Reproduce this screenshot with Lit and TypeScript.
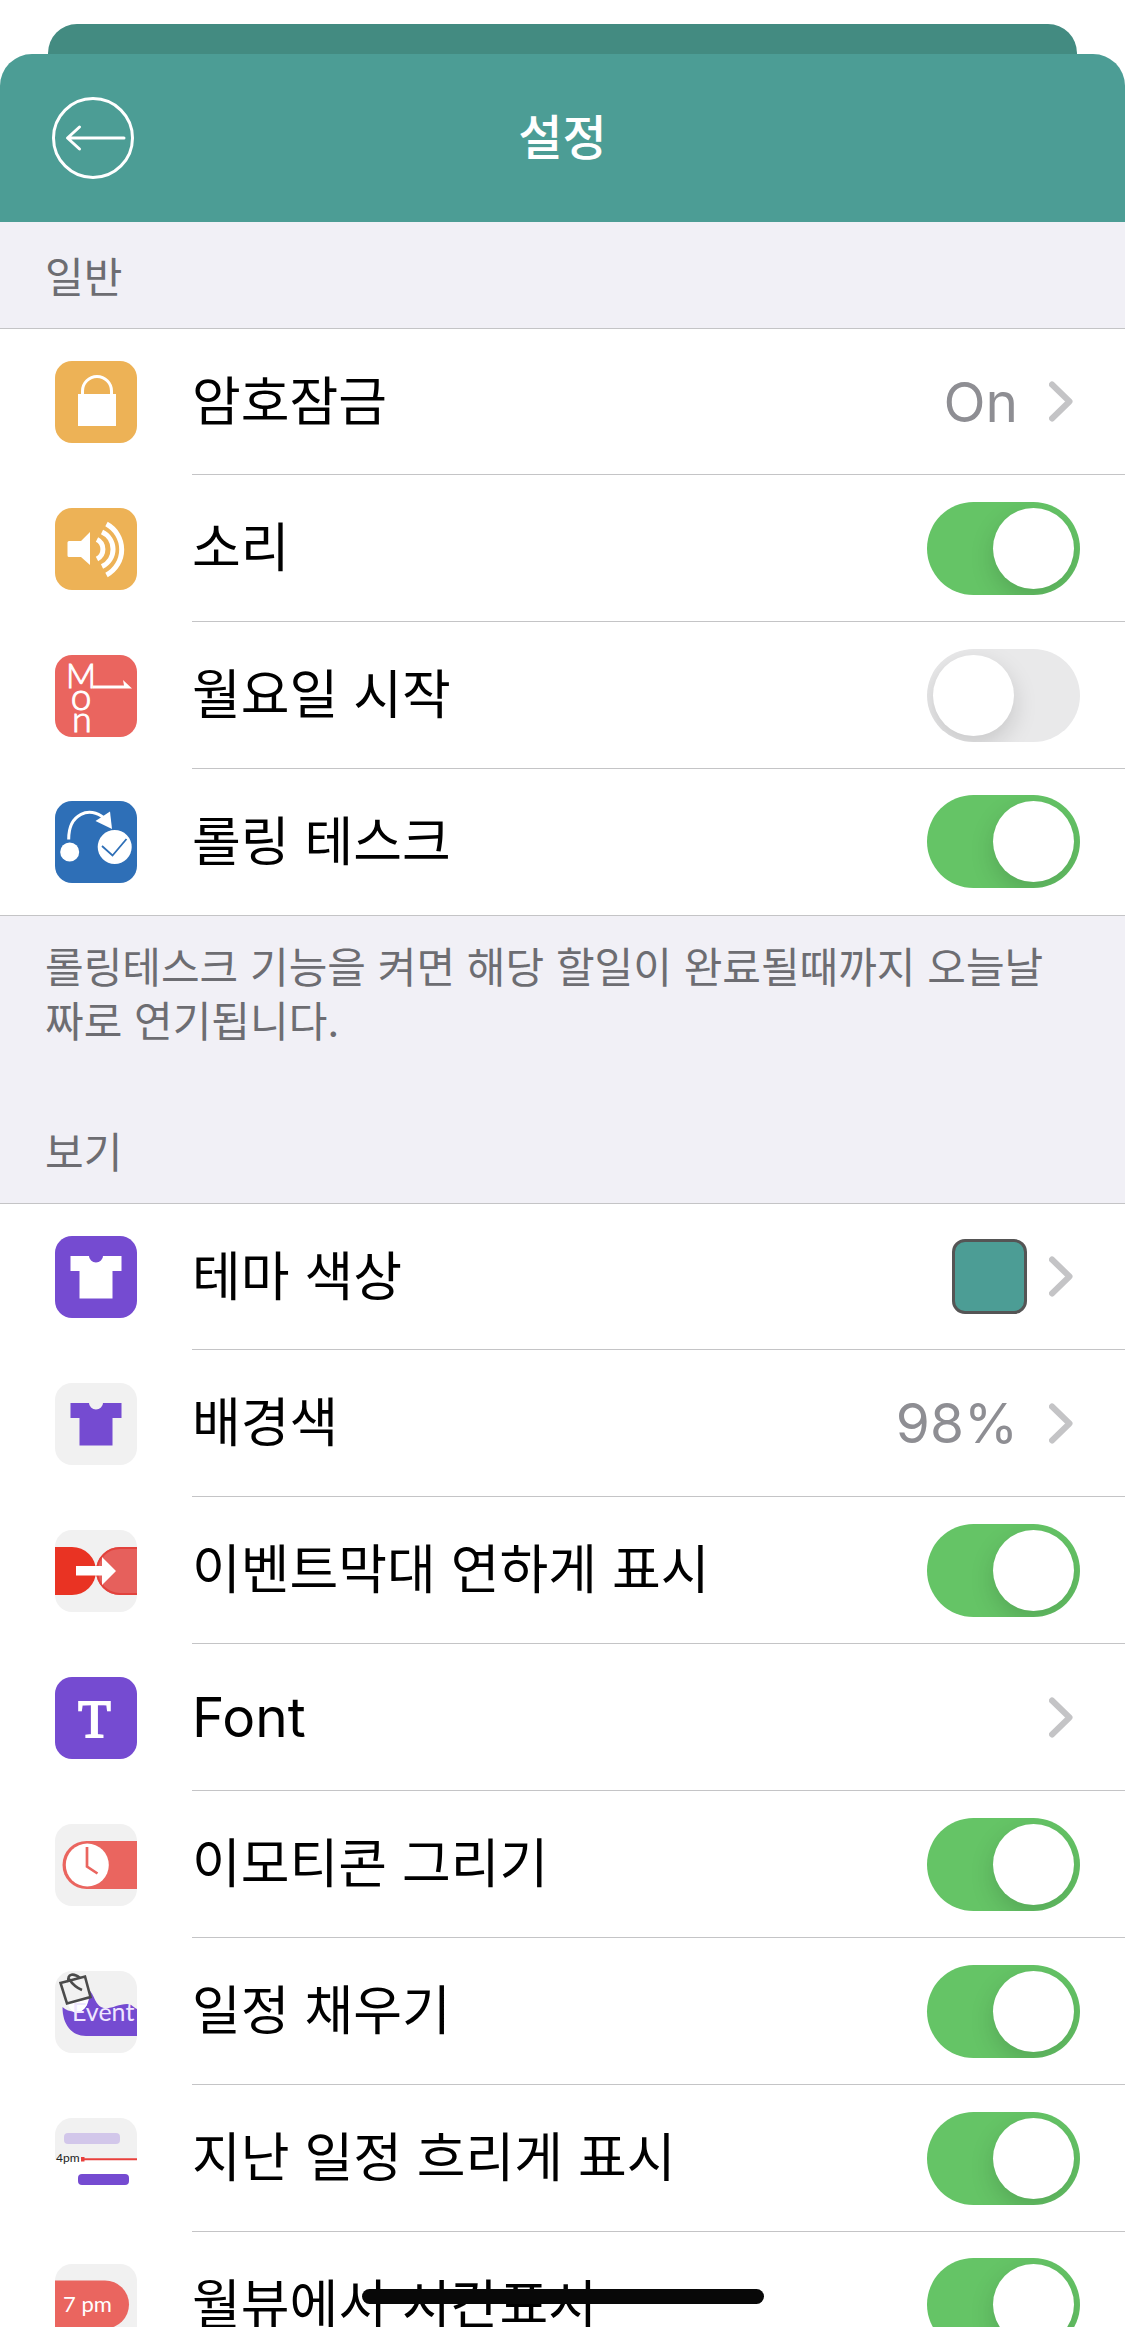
import { LitElement, html, css, svg, nothing, TemplateResult } from "lit";
import { customElement, property, state } from "lit/decorators.js";
import { classMap } from "lit/directives/class-map.js";

type IconName =
  | "lock" | "sound" | "monday" | "rolling" | "theme" | "background"
  | "fade" | "font" | "clock" | "fill" | "past" | "time";

interface Item {
  id: string;
  icon: IconName;
  label: string;
  latin?: boolean;
  on?: boolean;
  value?: string;
  swatch?: boolean;
}

interface Section {
  title: string;
  items: Item[];
  note?: string;
}

const SECTIONS: Section[] = [
  {
    title: "일반",
    items: [
      { id: "passcode", icon: "lock", label: "암호잠금", value: "On" },
      { id: "sound", icon: "sound", label: "소리", on: true },
      { id: "monday", icon: "monday", label: "월요일 시작", on: false },
      { id: "rolling", icon: "rolling", label: "롤링 테스크", on: true },
    ],
    note: "롤링테스크 기능을 켜면 해당 할일이 완료될때까지 오늘날짜로 연기됩니다.",
  },
  {
    title: "보기",
    items: [
      { id: "theme", icon: "theme", label: "테마 색상", swatch: true },
      { id: "background", icon: "background", label: "배경색", value: "98%" },
      { id: "fade", icon: "fade", label: "이벤트막대 연하게 표시", on: true },
      { id: "font", icon: "font", label: "Font", latin: true },
      { id: "emoticon", icon: "clock", label: "이모티콘 그리기", on: true },
      { id: "fill", icon: "fill", label: "일정 채우기", on: true },
      { id: "past", icon: "past", label: "지난 일정 흐리게 표시", on: true },
      { id: "time", icon: "time", label: "월뷰에서 시간표시", on: true },
    ],
  },
];

const tile = (fill: string) => svg`<rect width="82" height="82" rx="17" fill=${fill}></rect>`;
const shirt = (fill: string) => svg`
  <path fill=${fill} d="M15.500 20H34a7 6.500 0 0 0 14 0H66.500V35H57.500V62.500H24.500V35H15.500Z"></path>`;

const ICONS: Record<IconName, TemplateResult> = {
  lock: svg`${tile("#edb256")}
    <rect x="23" y="33" width="38" height="32" fill="#fff"></rect>
    <path d="M27.500 34V30a14.500 14.500 0 0 1 29 0V34" fill="none" stroke="#fff" stroke-width="3"></path>`,
  sound: svg`${tile("#edb256")}
    <path d="M14 33H26L35 24V57L26 49H14a1.500 1.500 0 0 1 -1.500 -1.500V34.500A1.500 1.500 0 0 1 14 33Z" fill="#fff"></path>
    <g fill="none" stroke="#fff" stroke-width="5">
      <path d="M42 31.500A11 11 0 0 1 42 51"></path>
      <path d="M47 24A19 19 0 0 1 47 58.500"></path>
      <path d="M51.500 16A29 29 0 0 1 51.500 67"></path>
    </g>`,
  monday: svg`${tile("#ea655f")}
    <g fill="#fff" stroke="#fff" stroke-width="1" font-family="Lato, sans-serif" font-weight="300" text-anchor="middle">
      <text x="26" y="33" font-size="33">M</text>
      <text x="26" y="55" font-size="37">o</text>
      <text x="27" y="77" font-size="36">n</text>
    </g>
    <path d="M38 30.500H69L68 25L77 33.500H38Z" fill="#fff"></path>`,
  rolling: svg`${tile("#2e6fb7")}
    <circle cx="14.700" cy="51" r="9.500" fill="#fff"></circle>
    <circle cx="59.700" cy="46" r="17" fill="#fff"></circle>
    <path d="M13.700 38.500C13.500 12 35 5 49 17" fill="none" stroke="#fff" stroke-width="3"></path>
    <path d="M40.500 20L55 10.500L57 28Z" fill="#fff"></path>
    <path d="M47 45L57.500 54.500L71.500 38" fill="none" stroke="#2e6fb7" stroke-width="1.800"></path>`,
  theme: svg`${tile("#754bd1")}${shirt("#fff")}`,
  background: svg`${tile("#f1f1f1")}${shirt("#754bd1")}`,
  fade: svg`${tile("#f1f1f1")}
    <path d="M0 17H17a24 24 0 0 1 0 48H0Z" fill="#e93323"></path>
    <path d="M82 17H65a24 24 0 0 0 0 48H82Z" fill="#e6605c"></path>
    <path d="M82 18H65a23 23 0 0 0 0 46H82" fill="none" stroke="#e2423c" stroke-width="2"></path>
    <path d="M21 36H47V27L61 41L47 55V45.500H21Z" fill="#fff"></path>`,
  font: svg`${tile("#754bd1")}
    <text x="39.500" y="60" font-size="53" text-anchor="middle" fill="#fff" stroke="#fff" stroke-width="2"
      font-family="Liberation Serif, serif">T</text>`,
  clock: svg`${tile("#f1f1f1")}
    <path d="M82 17H31.500a24 24 0 0 0 0 48H82Z" fill="#ea655f"></path>
    <circle cx="32.300" cy="41" r="21.500" fill="#fff"></circle>
    <path d="M32 23V42.500L42.500 49.500" fill="none" stroke="#ea655f" stroke-width="2.700"></path>`,
  fill: svg`${tile("#f1f1f1")}
    <path d="M7.500 36C14 42 26 43 32 34L34 19C39 23 40 33 46 36C54 40 62 33 72 33C77 33 79 37 82 38V65H31C17 65 7.500 54 7.500 36Z" fill="#754bd1"></path>
    <path d="M13 34L34 27C33 33 30 40 22 42C18 42 15 38 13 34Z" fill="#fff"></path>
    <path d="M5.500 12L30 5.500L35.500 26L12 32.500Z" fill="#f1f1f1" stroke="#4b4b4b" stroke-width="2.600"></path>
    <path d="M13.500 11C12 2 19 2 25 7M14 8C18 14 22 17 27 19" fill="none" stroke="#4b4b4b" stroke-width="2.600"></path>
    <text x="17" y="49.500" font-size="25" fill="#efe7ff" font-family="Lato, sans-serif">Event</text>`,
  past: svg`
    <path d="M0 41V17A17 17 0 0 1 17 0H65A17 17 0 0 1 82 17V41Z" fill="#f1f1f1"></path>
    <rect x="9" y="15" width="56" height="11" rx="4" fill="#d2c7ea"></rect>
    <text x="1" y="44" font-size="12" fill="#222" font-family="Lato, sans-serif">4pm</text>
    <path d="M27 41.200H82" stroke="#e8403c" stroke-width="2"></path>
    <rect x="26" y="39" width="3.500" height="4.500" fill="#e8403c"></rect>
    <rect x="23" y="56" width="51" height="11" rx="4" fill="#754bd1"></rect>`,
  time: svg`${tile("#f1f1f1")}
    <path d="M0 16.500H50a24 24 0 0 1 0 48H0Z" fill="#ea655f"></path>
    <text x="8" y="48" font-size="22" fill="#fff" font-family="Lato, sans-serif">7 pm</text>`,
};

@customElement("setting-row")
export class SettingRow extends LitElement {
  @property({ attribute: false }) item!: Item;
  @state() private on = false;

  static styles = css`
    :host {
      display: block;
    }
    .row {
      display: flex;
      align-items: stretch;
      width: 100%;
      height: 100%;
      padding: 0 0 0 55px;
      border: 0;
      background: none;
      font: inherit;
      color: inherit;
      text-align: left;
      cursor: pointer;
    }
    .row,
    .row * {
      box-sizing: border-box;
    }
    .icon {
      flex: none;
      align-self: center;
      width: 82px;
      height: 82px;
      margin-right: 55px;
    }
    .body {
      display: flex;
      flex: 1;
      min-width: 0;
      align-items: center;
      padding-right: 45px;
      border-bottom: 1px solid var(--line);
    }
    .label {
      flex: 1;
      min-width: 0;
      font-size: 53px;
      line-height: 72px;
    }
    .latin,
    .value {
      font-size: 55px;
    }
    .value {
      color: #8e8e93;
      line-height: 72px;
      margin-right: 31px;
    }
    .swatch {
      width: 75px;
      height: 75px;
      margin-right: 22px;
      border: 3px solid #555;
      border-radius: 13px;
      background: var(--theme);
    }
    .chevron {
      flex: none;
      width: 24px;
      height: 41px;
      margin-right: 7px;
    }
    .toggle {
      appearance: none;
      flex: none;
      width: 153px;
      height: 93px;
      margin: 0;
      padding: 6px;
      border-radius: 47px;
      background: #e9e9ea;
      overflow: hidden;
      cursor: pointer;
    }
    .toggle::before {
      content: "";
      display: block;
      width: 81px;
      height: 81px;
      border-radius: 50%;
      background: #fff;
      box-shadow: 0 9px 24px rgba(0, 0, 0, 0.15);
    }
    .toggle:checked {
      background: #65c466;
    }
    .toggle:checked::before {
      margin-left: auto;
    }
  `;

  willUpdate(changed: Map<string, unknown>) {
    if (changed.has("item")) this.on = this.item.on ?? false;
  }

  private icon() {
    return html`<svg class="icon" viewBox="0 0 82 82" aria-hidden="true">${ICONS[this.item.icon]}</svg>`;
  }

  render() {
    const { id, label, latin, value, swatch, on } = this.item;
    if (on !== undefined) {
      return html`<label class="row" for=${id}>
        ${this.icon()}
        <span class="body">
          <span class="label">${label}</span>
          <input
            class="toggle"
            id=${id}
            type="checkbox"
            role="switch"
            .checked=${this.on}
            @change=${(e: Event) => (this.on = (e.target as HTMLInputElement).checked)}
          />
        </span>
      </label>`;
    }
    return html`<button class="row" type="button">
      ${this.icon()}
      <span class="body">
        <span class=${classMap({ label: true, latin: !!latin })}>${label}</span>
        ${value ? html`<span class="value">${value}</span>` : nothing}
        ${swatch ? html`<span class="swatch"></span>` : nothing}
        <svg class="chevron" viewBox="0 0 24 41" aria-hidden="true">
          <path d="M3 3.500L20.500 20.500L3 37.500" fill="none" stroke="#c4c4c6" stroke-width="6"
            stroke-linecap="round" stroke-linejoin="round"></path>
        </svg>
      </span>
    </button>`;
  }
}

@customElement("app-root")
export class AppRoot extends LitElement {
  static styles = css`
    :host {
      --theme: #4c9d95;
      --line: #c4c4c6;
      position: relative;
      display: flex;
      flex-direction: column;
      height: 100vh;
      overflow: hidden;
      background: #fff;
      color: #000;
      font-family: Inter, "Noto Sans CJK KR", sans-serif;
    }
    .behind {
      flex: none;
      height: 30px;
      margin: 24px 48px 0;
      border-radius: 29px 29px 0 0;
      background: #438b81;
    }
    .bar {
      flex: none;
      display: grid;
      grid-template-columns: 1fr auto 1fr;
      align-items: center;
      height: 168px;
      padding: 0 52px;
      box-sizing: border-box;
      border-radius: 32px 32px 0 0;
      background: var(--theme);
      color: #fff;
    }
    .back {
      width: 82px;
      height: 82px;
      padding: 0;
      border: 0;
      background: none;
      cursor: pointer;
    }
    .back svg {
      display: block;
    }
    .title {
      margin: 0;
      font-size: 48px;
      font-weight: 500;
      line-height: 72px;
    }
    .content {
      flex: 1;
      min-height: 0;
      overflow-y: auto;
      scrollbar-width: none;
      background: #f1f0f6;
    }
    .heading,
    .note {
      margin: 0;
      color: #6d6d72;
      font-size: 42px;
      font-weight: 400;
      line-height: 54px;
    }
    .heading {
      padding: 29px 45px 23px;
    }
    .note {
      padding: 25px 45px 48px;
    }
    .list {
      margin: 0;
      padding: 0;
      list-style: none;
      background: #fff;
    }
    .item {
      display: grid;
      box-sizing: border-box;
      height: 147px;
    }
    .item:first-child {
      border-top: 1px solid var(--line);
    }
    .item:last-child {
      --line: transparent;
      border-bottom: 1px solid #c4c4c6;
    }
    .home {
      position: absolute;
      left: 50%;
      bottom: 23px;
      width: 402px;
      height: 15px;
      border-radius: 8px;
      background: #080808;
      transform: translateX(-50%);
    }
  `;

  render() {
    return html`
      <div class="behind"></div>
      <header class="bar">
        <button class="back" type="button" aria-label="뒤로">
          <svg viewBox="0 0 82 82" width="82" height="82" fill="none" stroke="#fff" stroke-width="3"
            stroke-linecap="round" stroke-linejoin="round" aria-hidden="true">
            <circle cx="41" cy="41" r="39.500"></circle>
            <path d="M72 41H16M27.500 30L15.500 41L27.500 52"></path>
          </svg>
        </button>
        <h1 class="title">설정</h1>
      </header>
      <main class="content">
        ${SECTIONS.map(
          (s) => html`<section>
            <h2 class="heading">${s.title}</h2>
            <ul class="list">
              ${s.items.map((i) => html`<li class="item"><setting-row .item=${i}></setting-row></li>`)}
            </ul>
            ${s.note ? html`<p class="note">${s.note}</p>` : nothing}
          </section>`
        )}
      </main>
      <div class="home"></div>
    `;
  }
}
